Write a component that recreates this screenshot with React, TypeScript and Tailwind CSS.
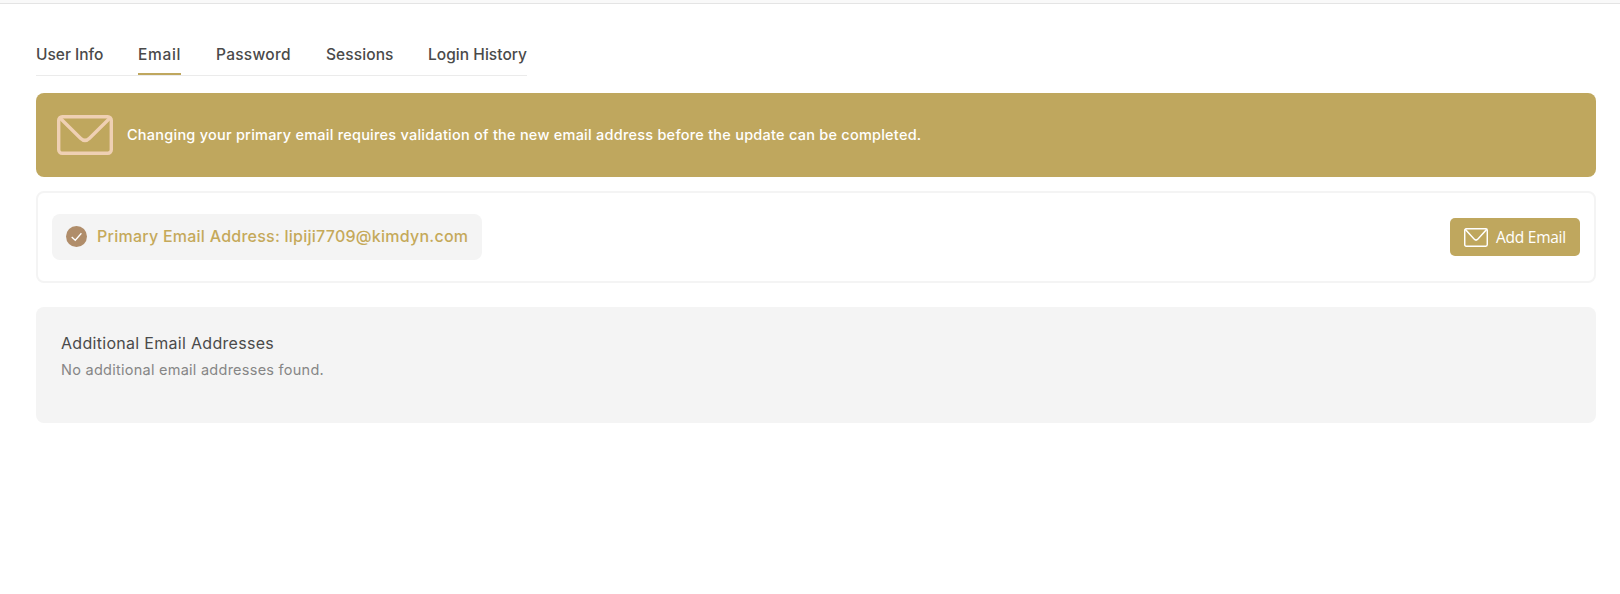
import { useState } from 'react';
import clsx from 'clsx';

const tabs = [
  { label: 'User Info', className: 'w-[67px]' },
  { label: 'Email', className: 'w-[43px] tracking-[0.7px]' },
  { label: 'Password', className: 'w-[75px] tracking-[0.28px]' },
  { label: 'Sessions', className: 'w-[67px] tracking-[0.1px]' },
  { label: 'Login History', className: 'w-[99px] tracking-[0.04px]' },
];

interface EnvelopeIconProps {
  className?: string;
  strokeWidth: number;
}

function EnvelopeIcon({ className, strokeWidth }: EnvelopeIconProps) {
  return (
    <svg
      viewBox="0 0 56 40"
      fill="none"
      stroke="currentColor"
      strokeWidth={strokeWidth}
      strokeLinejoin="round"
      preserveAspectRatio="none"
      className={className}
    >
      <rect x={strokeWidth / 2} y={strokeWidth / 2} width={56 - strokeWidth} height={40 - strokeWidth} rx="3.5" />
      <path d="M2.5 2.5 L23.5 23.2 Q28 27.6 32.5 23.2 L53.5 2.5" />
    </svg>
  );
}

function CheckBadge() {
  return (
    <svg viewBox="0 0 21 21" fill="none" className="mb-px h-[21px] w-[21px] shrink-0">
      <circle cx="10.5" cy="10.5" r="10.5" fill="#b08d6a" />
      <path d="M5.7 10.9 L9.3 14.2 L15.4 7.2" stroke="#fff" strokeWidth="1.3" />
    </svg>
  );
}

export default function App() {
  const [active, setActive] = useState('Email');

  return (
    <div className="min-h-screen bg-white font-['Inter',sans-serif] text-[#4a4a4a]">
      <div className="h-1 border-b border-[#e4e4e4] bg-[#f9f9f9]" />

      <main className="pl-9 pr-6 pt-9">
        <nav className="flex h-9 w-[491px] gap-[35px] border-b border-[#ebebeb]">
          {tabs.map((tab) => (
            <button
              key={tab.label}
              type="button"
              onClick={() => setActive(tab.label)}
              className={clsx(
                'h-[35px] shrink-0 whitespace-nowrap border-b-2 pb-[3px] text-left text-[15.5px] font-medium leading-7',
                tab.label === active ? 'border-[#bfa75e]' : 'border-transparent',
                tab.className,
              )}
            >
              {tab.label}
            </button>
          ))}
        </nav>

        <section className="mt-[17px] flex h-[84px] items-center gap-3.5 rounded-lg bg-[#bfa75e] pl-[21px]">
          <EnvelopeIcon strokeWidth={3.4} className="h-10 w-14 text-[#efd0b3]" />
          <p className="whitespace-nowrap text-[14.5px] font-medium tracking-[0.24px] text-white">
            Changing your primary email requires validation of the new email address before the update can be completed.
          </p>
        </section>

        <section className="mt-3.5 flex h-[92px] items-center justify-between rounded-lg border-2 border-[#f4f4f4] px-3.5">
          <div className="flex h-[46px] w-[430px] items-center gap-2.5 rounded-lg bg-[#f4f4f4] pl-3.5">
            <CheckBadge />
            <span className="whitespace-nowrap pb-0.5 text-base font-medium tracking-[0.25px] text-[#c5a95a]">
              Primary Email Address: lipiji7709@kimdyn.com
            </span>
          </div>
          <button
            type="button"
            className="flex h-[38px] w-[130px] items-center gap-2 rounded-[5px] bg-[#bfa75e] pl-3.5 font-['Open_Sans',sans-serif] text-[15.5px] tracking-[-0.25px] text-white"
          >
            <EnvelopeIcon strokeWidth={3.4} className="h-[19px] w-6 shrink-0" />
            <span className="whitespace-nowrap pt-px">Add Email</span>
          </button>
        </section>

        <section className="mt-6 h-[116px] rounded-lg bg-[#f4f4f4] px-[25px] pt-6">
          <h2 className="text-base leading-6 tracking-[0.3px]">Additional Email Addresses</h2>
          <p className="mt-[3px] text-[14.5px] leading-6 tracking-[0.26px] text-[#868686]">
            No additional email addresses found.
          </p>
        </section>
      </main>
    </div>
  );
}
